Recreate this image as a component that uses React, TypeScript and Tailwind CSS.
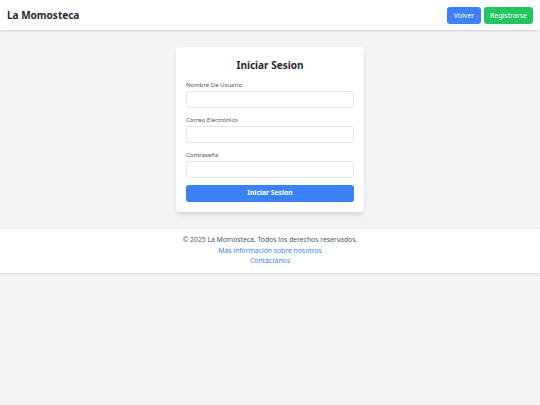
export default function App() {
  return (
    <div className="min-h-screen bg-[#f3f4f6] font-['Noto_Sans',sans-serif] text-[#1f2937]">
      <header className="h-[30px] bg-white shadow-sm flex items-center justify-between px-[7px]">
        <h1 className="text-[10px] font-bold text-[#1f2937]">La Momosteca</h1>
        <div className="flex gap-[3px]">
          <button className="h-[17px] w-[34px] rounded-[3px] bg-[#3b82f6] text-white text-[7px] leading-none">Volver</button>
          <button className="h-[17px] w-[49px] rounded-[3px] bg-[#22c55e] text-white text-[7px] leading-none">Registrarse</button>
        </div>
      </header>

      <main className="py-[17px]">
        <div className="mx-auto w-[188px] bg-white rounded-[4px] shadow-md px-[10px] pt-[10px] pb-[10px]">
          <h2 className="text-center text-[10px] leading-[16px] font-bold text-[#1f2937] mb-[7px]">Iniciar Sesion</h2>
          <form className="flex flex-col">
            <label className="text-[6px] leading-[10px] text-[#4b5563]">Nombre De Usuario</label>
            <input className="mt-[1px] h-[17px] w-full rounded-[3px] border border-[#e5e7eb] bg-white" />
            <label className="mt-[7px] text-[6px] leading-[10px] text-[#4b5563]">Correo Electrónico</label>
            <input className="mt-[1px] h-[17px] w-full rounded-[3px] border border-[#e5e7eb] bg-white" />
            <label className="mt-[7px] text-[6px] leading-[10px] text-[#4b5563]">Contraseña</label>
            <input type="password" className="mt-[1px] h-[17px] w-full rounded-[3px] border border-[#e5e7eb] bg-white" />
            <button type="button" className="mt-[7px] h-[17px] w-full rounded-[3px] bg-[#3b82f6] text-white text-[6.8px] font-bold leading-none">Iniciar Sesion</button>
          </form>
        </div>
      </main>

      <footer className="bg-white shadow-sm pt-[6px] pb-[6px] text-center text-[6.8px] leading-[10.5px]">
        <p className="text-[#4b5563]">© 2025 La Momosteca. Todos los derechos reservados.</p>
        <p><a className="text-[#3b82f6]">Más información sobre nosotros</a></p>
        <p><a className="text-[#3b82f6]">Contáctanos</a></p>
      </footer>
    </div>
  );
}
